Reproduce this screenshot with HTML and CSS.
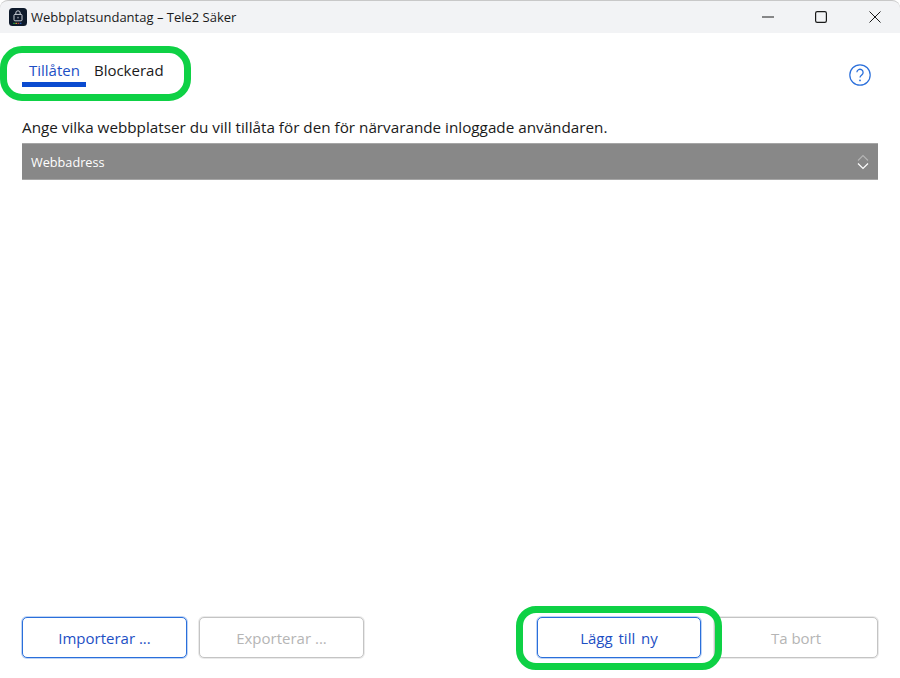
FILE: index.html
```html
<!DOCTYPE html>
<html lang="sv">
<head>
<meta charset="utf-8">
<title>Webbplatsundantag – Tele2 Säker</title>
<link rel="stylesheet" href="styles.css">
</head>
<body>
<div class="window">
  <header class="titlebar">
    <svg class="app-icon" viewBox="0 0 18 18" width="18" height="18" aria-hidden="true">
      <rect width="18" height="18" rx="3.5" fill="#0e1a2b"/>
      <rect x="5" y="6.4" width="8" height="6.4" rx="1" fill="none" stroke="#c9ced6" stroke-width="1"/>
      <path d="M6.8 6.4V5a2.2 2.2 0 0 1 4.4 0v1.4" fill="none" stroke="#c9ced6" stroke-width="1"/>
      <rect x="8.5" y="8.8" width="1" height="1.6" fill="#c9ced6"/>
      <rect x="4.2" y="14.8" width="1.6" height="1" fill="#27c24c"/>
      <rect x="6.4" y="14.8" width="1.6" height="1" fill="#f2c230"/>
      <rect x="8.6" y="14.8" width="1.6" height="1" fill="#e8443a"/>
      <rect x="10.8" y="14.8" width="1.6" height="1" fill="#2f6fe0"/>
    </svg>
    <span class="title">Webbplatsundantag – Tele2 Säker</span>
    <div class="controls">
      <svg class="minimize" width="12" height="12" viewBox="0 0 12 12" aria-hidden="true"><path d="M0 6h12" stroke="#1a1a1a" stroke-width="1"/></svg>
      <svg width="12" height="12" viewBox="0 0 12 12" aria-hidden="true"><rect x=".6" y=".6" width="10.8" height="10.8" rx="1.6" fill="none" stroke="#1a1a1a" stroke-width="1.2"/></svg>
      <svg width="12" height="12" viewBox="0 0 12 12" aria-hidden="true"><path d="M.5.5l11 11M11.5.5l-11 11" stroke="#1a1a1a" stroke-width="1"/></svg>
    </div>
  </header>
  <main class="content">
    <div class="top-row">
      <nav class="tabs">
        <span class="tab active">Tillåten</span>
        <span class="tab next">Blockerad</span>
      </nav>
      <svg class="help" width="22" height="22" viewBox="0 0 22 22" aria-hidden="true">
        <circle cx="11" cy="11" r="10.2" fill="none" stroke="#2a6fdb" stroke-width="1.2"/>
        <path d="M7.9 8.3a3.1 3.1 0 1 1 4.9 2.6c-1.1.8-1.8 1.3-1.8 2.7" fill="none" stroke="#2a6fdb" stroke-width="1.3"/>
        <circle cx="11" cy="16.4" r=".9" fill="#2a6fdb"/>
      </svg>
    </div>
    <p class="desc">Ange vilka webbplatser du vill tillåta för den för närvarande inloggade användaren.</p>
    <div class="table-head">
      <span>Webbadress</span>
      <svg width="12" height="16" viewBox="0 0 12 16" aria-hidden="true">
        <path d="M1 6.5L6 1.5l5 5" fill="none" stroke="#b4b4b4" stroke-width="1.1"/>
        <path d="M1 9.5l5 5 5-5" fill="none" stroke="#fff" stroke-width="1.2"/>
      </svg>
    </div>
    <div class="table-body"></div>
    <footer class="actions">
      <div class="group">
        <button class="btn primary">Importerar ...</button>
        <button class="btn" disabled>Exporterar ...</button>
      </div>
      <div class="group group-right">
        <button class="btn primary add">Lägg till ny</button>
        <button class="btn" disabled>Ta bort</button>
      </div>
    </footer>
  </main>
  <div class="mark mark-tabs"></div>
  <div class="mark mark-add"></div>
</div>
</body>
</html>
```

FILE: styles.css
```css
* { box-sizing: border-box; }
html, body { margin: 0; height: 100%; background: #fff; }
body { font-family: "Open Sans", "Noto Sans", sans-serif; color: #1a1a1a; }
.window { position: relative; width: 900px; height: 678px; overflow: hidden; display: flex; flex-direction: column; background: #fff; }
.titlebar { height: 33px; flex: none; display: flex; align-items: center; padding-left: 9px; background: #f2f3f5; border-top: 1px solid #c8c8c8; border-radius: 8px 8px 0 0; }
.app-icon { flex: none; margin-right: 4px; }
.title { font-size: 13px; color: #1a1a1a; }
.controls { margin-left: auto; display: flex; gap: 42px; padding-right: 19px; align-items: center; }
.minimize { margin-right: -1px; }
.content { flex: 1; display: flex; flex-direction: column; padding: 0 22px; min-height: 0; }
.top-row { display: flex; justify-content: space-between; align-items: flex-start; padding-top: 25px; }
.tabs { display: flex; gap: 0; }
.tab { font-size: 15px; line-height: 24px; height: 29px; padding: 0 7px; }
.tab.active { padding-right: 6px; color: #1d4fc4; border-bottom: 5px solid #0b4bd0; }
.tab.next { padding-left: 8px; }
.help { margin: 6px 7px 0 0; }
.desc { margin: 30px 0 0; font-size: 15.25px; line-height: 20px; }
.table-head { margin-top: 6px; height: 37px; flex: none; display: flex; justify-content: space-between; align-items: center; padding: 0 9px; background: #888; border: 1px solid #a6a6a6; border-width: 1px 0; color: #fff; font-size: 12.7px; }
.table-body { flex: 1; }
.actions { display: flex; justify-content: space-between; padding-bottom: 20px; }
.group { display: flex; gap: 12px; }
.group-right { gap: 13px; }
.btn { width: 165px; height: 41px; font: 15px "Open Sans", "Noto Sans", sans-serif; border-radius: 5px; background: #fff; border: 1px solid #c4c4c4; box-shadow: 0 0 0 1px rgba(196, 196, 196, .35); color: #b5b5b5; padding: 0; }
.group-right .btn { width: 164px; }
.btn.primary { border-color: #2a6fdb; box-shadow: 0 0 0 1px rgba(42, 111, 219, .3); color: #1d4fc4; }
.btn.add { word-spacing: 2px; }
.mark { position: absolute; border: 7px solid #0ed145; background: transparent; pointer-events: none; }
.mark-tabs { left: 0; top: 46px; width: 191px; height: 55px; border-radius: 22px; }
.mark-add { left: 516px; top: 606px; width: 206px; height: 64px; border-radius: 20px; }
```
